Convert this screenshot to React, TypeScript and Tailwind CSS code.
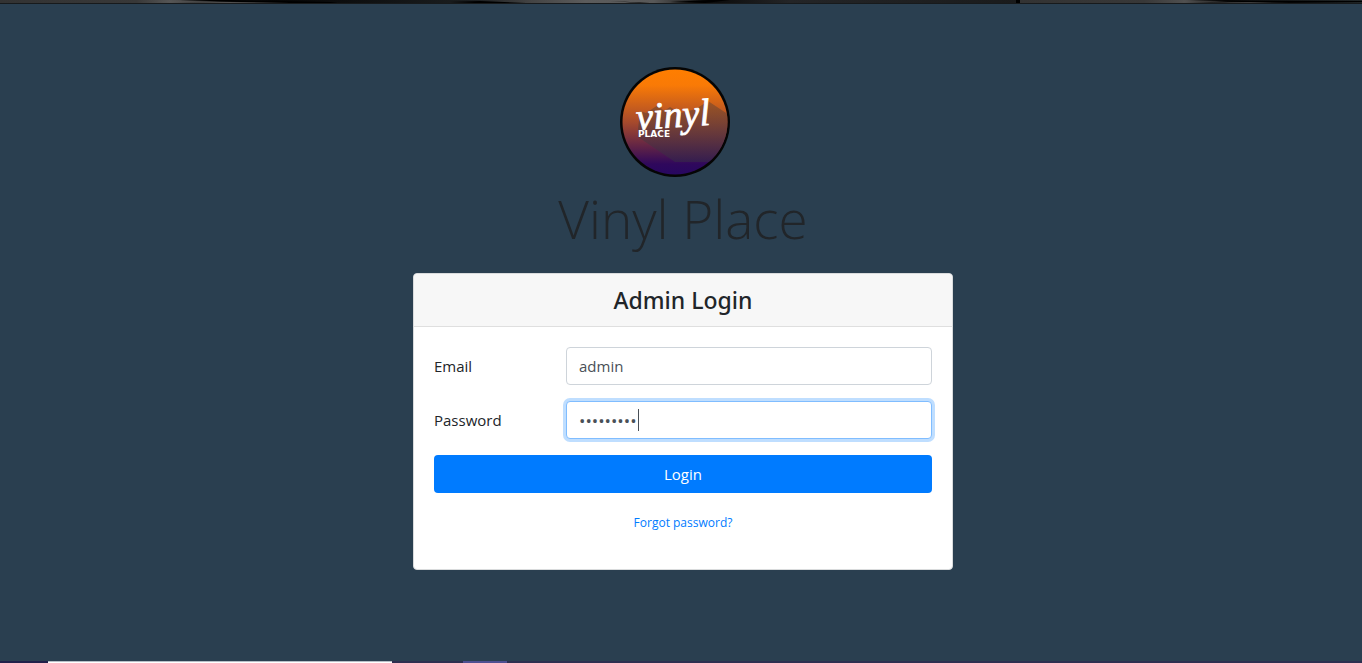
import { useState } from "react";

function BackdropEdge() {
  return (
    <svg className="block h-1 w-full" viewBox="0 0 1362 4" preserveAspectRatio="none" aria-hidden="true">
      <defs>
        <linearGradient id="edge" x1="0" x2="1">
          <stop offset="0" stopColor="#333333" />
          <stop offset="0.1" stopColor="#383838" />
          <stop offset="0.125" stopColor="#555555" />
          <stop offset="0.17" stopColor="#1c1c1c" />
          <stop offset="0.2" stopColor="#050505" />
          <stop offset="0.35" stopColor="#1c1f21" />
          <stop offset="0.39" stopColor="#444444" />
          <stop offset="0.43" stopColor="#5c5c5c" />
          <stop offset="0.48" stopColor="#585858" />
          <stop offset="0.52" stopColor="#0a0a0a" />
          <stop offset="0.58" stopColor="#242527" />
          <stop offset="0.748" stopColor="#1a1b1c" />
          <stop offset="0.749" stopColor="#333333" />
          <stop offset="0.84" stopColor="#383838" />
          <stop offset="0.87" stopColor="#505050" />
          <stop offset="0.9" stopColor="#0a0a0a" />
          <stop offset="1" stopColor="#222728" />
        </linearGradient>
      </defs>
      <rect width="1362" height="4" fill="url(#edge)" />
      <path d="M180 0 L240 2 L330 4 H345 L330 2 L230 0Z M480 1 L550 4 H500 L450 2Z M610 1 L650 3 H640Z M670 2 L710 0 H730 L705 3Z M900 3 H1016 V0 H1020 V4 H900Z M1190 0 L1270 3 L1362 2 V1 H1250Z" fill="#000000" />
      <rect y="3" width="1362" height="1" fill="#171a1c" />
      <path d="M150 1 L230 3 H290 L220 2Z M1170 1 L1250 3 H1290 L1230 2Z" fill="#5c5a59" />
    </svg>
  );
}

function Logo() {
  return (
    <svg className="mr-4 block size-[110px]" viewBox="0 0 110 110" role="img" aria-label="Vinyl Place logo">
      <defs>
        <linearGradient id="sunset" x1="0" y1="0" x2="0" y2="1">
          <stop offset="0" stopColor="#ff7e00" />
          <stop offset="0.15" stopColor="#f97a06" />
          <stop offset="0.5" stopColor="#a74a2c" />
          <stop offset="0.75" stopColor="#5c2148" />
          <stop offset="0.9" stopColor="#2f085c" />
          <stop offset="1" stopColor="#270760" />
        </linearGradient>
        <linearGradient id="shade" x1="0" y1="0" x2="0" y2="1">
          <stop offset="0" stopColor="#8a4f27" />
          <stop offset="0.5" stopColor="#5f3a3b" />
          <stop offset="1" stopColor="#35234c" />
        </linearGradient>
        <clipPath id="disc">
          <circle cx="55" cy="55" r="52.5" />
        </clipPath>
      </defs>
      <circle cx="55" cy="55" r="55" fill="#050505" />
      <circle cx="55" cy="55" r="52.5" fill="url(#sunset)" />
      <path d="M18 62 L20 44 L26 46 L38 38 L44 44 L50 40 L60 46 L76 42 L88 34 L112 50 V95 H55 L18 70Z" fill="url(#shade)" fillOpacity="0.75" clipPath="url(#disc)" />
      <text x="17" y="63" fontSize="38" fill="#ffffff" stroke="#ffffff" strokeWidth="0.8" transform="rotate(-4 17 63)" className="font-['Liberation_Serif',serif] italic">vinyl</text>
      <text x="18" y="70" fontSize="9" fill="#ffffff" className="font-['DejaVu_Sans',sans-serif] font-bold">PLACE</text>
    </svg>
  );
}

function BottomEdge() {
  return (
    <div className="flex h-0.5 bg-[#2d2f50]" aria-hidden="true">
      <div className="w-12 bg-[#20204a]" />
      <div className="w-[344px] border-t border-[#b7c0c8] bg-white" />
      <div className="w-[71px]" />
      <div className="w-11 bg-[#4e4f91]" />
    </div>
  );
}

const fieldClass =
  "h-[38px] w-full rounded border bg-white px-3 text-[#495057] caret-transparent outline-none";

export default function App() {
  const [email, setEmail] = useState("admin");
  const [password, setPassword] = useState("vinyl1234");

  return (
    <div className="flex min-h-screen flex-col bg-[#2a3f50] font-['Open_Sans',sans-serif] text-[#212529]">
      <BackdropEdge />
      <main className="flex flex-1 flex-col items-center pt-[63px] pl-1">
        <Logo />
        <h1 className="mt-2 mb-3 text-[53px] leading-[68px] font-light">Vinyl Place</h1>
        <section className="mt-2 w-full max-w-[540px] rounded border border-[#d9dbdc] bg-white">
          <header className="rounded-t border-b border-[#dfdfdf] bg-[#f7f7f7] py-3">
            <h2 className="text-center font-['Noto_Sans','Open_Sans',sans-serif] text-[23px] leading-7 font-medium">Admin Login</h2>
          </header>
          <form className="flex flex-col gap-4 px-5 pt-5 pb-9" onSubmit={(e) => e.preventDefault()}>
            <div className="flex items-center">
              <label htmlFor="email" className="w-[132px] shrink-0 text-[15px]">Email</label>
              <input id="email" type="text" value={email} onChange={(e) => setEmail(e.target.value)} className={`${fieldClass} border-[#ced4da] text-[15px]`} />
            </div>
            <div className="flex items-center">
              <label htmlFor="password" className="w-[132px] shrink-0 text-[15px]">Password</label>
              <div className="relative w-full">
                <input id="password" type="password" value={password} onChange={(e) => setPassword(e.target.value)} className={`${fieldClass} border-[#80bdff] text-[17px] ring-3 ring-[#bfdeff]`} />
                <span className="absolute top-2 left-[72px] h-[22px] w-px bg-[#495057]" aria-hidden="true" />
              </div>
            </div>
            <button type="submit" className="h-[38px] rounded bg-[#007bff] text-[15px] text-white">Login</button>
            <a href="#forgot" className="mt-1 self-center text-[12px] leading-5 text-[#007bff]">Forgot password?</a>
          </form>
        </section>
      </main>
      <BottomEdge />
    </div>
  );
}
